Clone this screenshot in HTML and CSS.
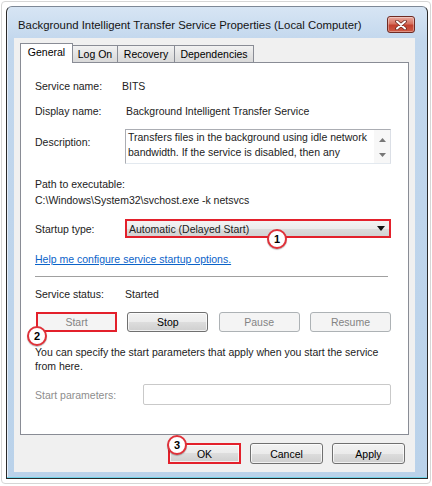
FILE: index.html
```html
<!DOCTYPE html>
<html>
<head>
<meta charset="utf-8">
<link rel="stylesheet" href="styles.css">
</head>
<body>
<div class="shot">
  <div class="window">
    <div class="titlebar">
      <span class="title">Background Intelligent Transfer Service Properties (Local Computer)</span>
      <div class="close">
        <svg width="12" height="10" viewBox="0 0 12 10"><path d="M2 1.5 L10 8.5 M10 1.5 L2 8.5" stroke="#6b2a22" stroke-width="3.6" stroke-linecap="round"/><path d="M2 1.5 L10 8.5 M10 1.5 L2 8.5" stroke="#ffffff" stroke-width="2" stroke-linecap="round"/></svg>
      </div>
    </div>
    <div class="client">
      <div class="tabs">
        <div class="tab active">General</div>
        <div class="tab">Log On</div>
        <div class="tab">Recovery</div>
        <div class="tab">Dependencies</div>
      </div>
      <div class="panel">
        <div class="row r-name"><span class="label">Service name:</span><span class="value bits">BITS</span></div>
        <div class="row r-display"><span class="label">Display name:</span><span class="value shift">Background Intelligent Transfer Service</span></div>
        <div class="row r-desc">
          <span class="label desc-label">Description:</span>
          <div class="descbox">
            <div class="desctext">Transfers files in the background using idle network bandwidth. If the service is disabled, then any</div>
            <div class="scroll">
              <svg width="7" height="4" viewBox="0 0 7 4"><polygon points="0,4 7,4 3.5,0" fill="#777"/></svg>
              <svg width="7" height="4" viewBox="0 0 7 4"><polygon points="0,0 7,0 3.5,4" fill="#777"/></svg>
            </div>
          </div>
        </div>
        <div class="line r-path">Path to executable:</div>
        <div class="line r-pathval">C:\Windows\System32\svchost.exe -k netsvcs</div>
        <div class="row r-startup">
          <span class="label">Startup type:</span>
          <div class="combo marked">
            <span>Automatic (Delayed Start)</span>
            <svg width="8" height="5" viewBox="0 0 8 5"><polygon points="0,0 8,0 4,5" fill="#111"/></svg>
          </div>
        </div>
        <a class="link r-link" href="#">Help me configure service startup options.</a>
        <div class="sep"></div>
        <div class="row r-status"><span class="label">Service status:</span><span class="value">Started</span></div>
        <div class="svcbtns">
          <div class="btn disabled marked">Start</div>
          <div class="btn">Stop</div>
          <div class="btn disabled">Pause</div>
          <div class="btn disabled">Resume</div>
        </div>
        <p class="info">You can specify the start parameters that apply when you start the service from here.</p>
        <div class="row r-params">
          <span class="label plabel">Start parameters:</span>
          <div class="pinput"></div>
        </div>
      </div>
      <div class="actions">
        <div class="btn dlg ok marked">OK</div>
        <div class="btn dlg">Cancel</div>
        <div class="btn dlg">Apply</div>
      </div>
    </div>
  </div>
  <div class="badge b1">1</div>
  <div class="badge b2">2</div>
  <div class="badge b3">3</div>
</div>
</body>
</html>
```
FILE: styles.css
```css
* { box-sizing: border-box; }
html, body { margin: 0; padding: 0; background: #ffffff; }
body { font-family: "Liberation Sans", Arial, sans-serif; font-size: 10.5px; color: #222; }

.shot {
  position: relative;
  margin: 1px;
  width: 430px;
  height: 483px;
  border: 1px solid #d6d6d6;
  border-radius: 4px;
  padding: 4px;
  background: #fff;
}

.window {
  width: 422px;
  height: 473px;
  border: 1px solid #2a2a2a;
  border-top-color: #7d8896;
  border-radius: 6px 6px 0 0;
  background: linear-gradient(#d7e5f4, #c2d7ed 34px, #bad2ea);
  box-shadow: inset 0 -1px 0 #6fd3e8, inset 1px 0 0 #e6eef8;
  display: flex;
  flex-direction: column;
}

.titlebar {
  height: 31px;
  display: flex;
  align-items: flex-start;
  padding: 0 12px 0 11px;
}
.title {
  font-size: 11.35px;
  margin-top: 11px;
  line-height: 14px;
  color: #141414;
  flex: 1;
  white-space: nowrap;
}
.close {
  margin-top: 9px;
  width: 28px;
  height: 17px;
  border: 1px solid #6e2b24;
  border-radius: 3px;
  background: linear-gradient(#e9a99f, #d6715f 45%, #c2402f 55%, #cf5a44);
  box-shadow: inset 0 0 0 1px rgba(255,255,255,0.35);
  display: flex;
  align-items: center;
  justify-content: center;
}

.client {
  margin: 0 12px 6px 7px;
  flex: 1;
  background: #f0f0f0;
  padding: 5px 6px 8px 6px;
  display: flex;
  flex-direction: column;
}

.tabs {
  display: flex;
  height: 19px;
  align-items: flex-end;
  position: relative;
  z-index: 1;
}
.tab {
  height: 17px;
  border: 1px solid #898c95;
  border-bottom: none;
  border-left: none;
  background: linear-gradient(#f2f2f2, #e4e4e4 50%, #d9d9d9);
  line-height: 16px;
  text-align: center;
  white-space: nowrap;
  color: #000;
}
.tab.active {
  height: 20px;
  border-left: 1px solid #898c95;
  background: #fff;
  line-height: 17px;
  margin-bottom: -1px;
  width: 53px;
}
.tab:nth-child(2) { width: 45px; }
.tab:nth-child(3) { width: 57px; }
.tab:nth-child(4) { width: 79px; }

.panel {
  height: 373px;
  border: 1px solid #898c95;
  background: #fff;
  padding: 16px 17px 0 14px;
  display: flex;
  flex-direction: column;
}

.row { display: flex; align-items: center; line-height: 14px; }
.label { width: 90px; flex: none; }
.value { white-space: nowrap; }
.bits { margin-left: -3px; }
.shift { margin-left: 1px; }
.line { line-height: 14px; }

.r-display { margin-top: 11px; }
.r-desc { margin-top: 11px; align-items: flex-start; }
.desc-label { margin-top: 6px; }
.descbox {
  flex: 1;
  height: 35px;
  border: 1px solid #abadb3;
  border-right-color: #dbdfe6;
  border-bottom-color: #e3e9ef;
  display: flex;
}
.desctext {
  flex: 1;
  line-height: 15px;
  padding: 0 2px;
}
.scroll {
  width: 16px;
  display: flex;
  flex-direction: column;
  align-items: center;
  justify-content: space-between;
  padding: 8px 0 6px;
  background: #f7f7f7;
}
.r-path { margin-top: 13px; }
.r-pathval { margin-top: 2px; }
.r-startup { margin-top: 12px; }
.combo {
  flex: 1;
  height: 19px;
  background: linear-gradient(#f3f3f3, #ebebeb 50%, #dcdcdc 50%, #d2d2d2);
  display: flex;
  align-items: center;
  justify-content: space-between;
  padding: 0 4px 0 2px;
}
.link {
  margin-top: 14px;
  line-height: 14px;
  color: #0b63c9;
  text-decoration: underline;
  align-self: flex-start;
}
.sep {
  margin-top: 10px;
  margin-right: 3px;
  height: 2px;
  border-top: 1px solid #a0a0a0;
  border-bottom: 1px solid #ffffff;
}
.r-status { margin-top: 9px; }

.btn {
  height: 21px;
  border: 1px solid #707070;
  border-radius: 3px;
  background: linear-gradient(#f2f2f2, #ebebeb 50%, #dddddd 50%, #cfcfcf);
  box-shadow: inset 0 0 0 1px rgba(255,255,255,0.7);
  display: flex;
  align-items: center;
  justify-content: center;
  color: #000;
}
.btn.disabled {
  border-color: #adb2b5;
  background: #f4f4f4;
  color: #838383;
  box-shadow: none;
}
.btn.marked, .combo.marked {
  border: 2px solid #e3202b;
  border-radius: 0;
}
.svcbtns {
  margin-top: 11px;
  margin-left: 1px;
  display: flex;
  justify-content: space-between;
}
.svcbtns .btn { width: 81px; height: 20px; }

.info {
  margin: 13px 0 0;
  line-height: 14px;
}
.r-params { margin-top: 11px; }
.plabel { width: 108px; color: #8d8d8d; }
.pinput {
  flex: 1;
  height: 21px;
  border: 1px solid #c9c9c9;
  border-radius: 2px;
  background: #fff;
}

.actions {
  margin-top: 8px;
  display: flex;
  justify-content: flex-end;
  gap: 9px;
  padding-right: 4px;
}
.btn.dlg { width: 73px; }

.badge {
  position: absolute;
  width: 20px;
  height: 20px;
  border-radius: 50%;
  border: 2px solid #e0323a;
  background: #fff;
  box-shadow: 0 1px 1px rgba(0,0,0,0.25);
  font-weight: bold;
  font-size: 11px;
  line-height: 16px;
  text-align: center;
  color: #000;
}
.b1 { left: 265px; top: 227px; }
.b2 { left: 25px; top: 324px; }
.b3 { left: 165px; top: 433px; }
```
